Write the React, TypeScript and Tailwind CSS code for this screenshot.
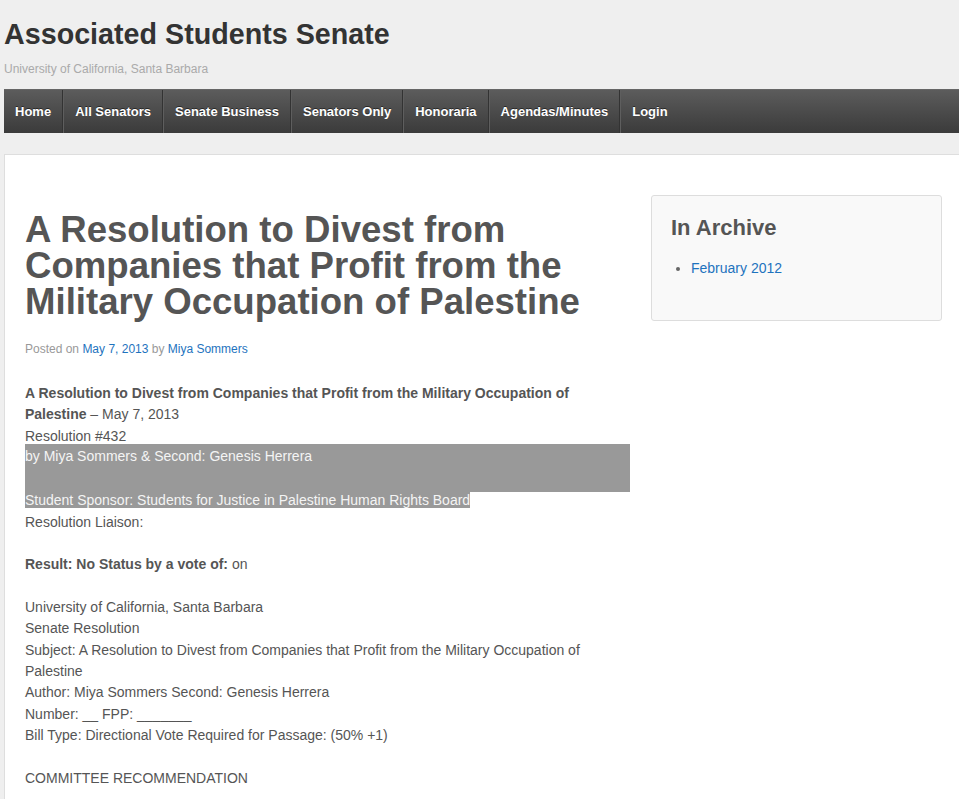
import React from "react";

const navItems = ["Home", "All Senators", "Senate Business", "Senators Only", "Honoraria", "Agendas/Minutes", "Login"];

export default function App() {
  return (
    <div className="min-h-[799px] bg-[#efefef] overflow-hidden" style={{ fontFamily: '"Liberation Sans", Arial, sans-serif' }}>
      <header className="pl-[4px] pt-[17px]">
        <h1 className="text-[28.7px] leading-[34px] font-bold text-[#333]">Associated Students Senate</h1>
        <div className="mt-[11px] text-[12px] leading-[14px] text-[#aaa]">University of California, Santa Barbara</div>
      </header>
      <nav className="ml-[4px] mt-[13px] h-[44px] flex bg-gradient-to-b from-[#5c5c5c] to-[#3b3b3b] border-t border-[#666]">
        {navItems.map((item, i) => (
          <div
            key={item}
            className={`flex items-center px-[11px] text-[13px] font-bold text-white [text-shadow:0_-1px_0_rgba(0,0,0,0.5)] ${i > 0 ? "border-l border-l-[#5e5e5e]" : ""} ${i < navItems.length - 1 ? "border-r border-r-[#333]" : ""}`}
          >
            {item}
          </div>
        ))}
      </nav>
      <main className="ml-[4px] mt-[21px] bg-white border-t border-l border-[#dedede] min-h-[660px] flex">
        <article className="w-[626px] pl-[20px] pt-[57px] shrink-0">
          <h2 className="text-[36.6px] leading-[36px] font-bold text-[#555]">
            A Resolution to Divest from Companies that Profit from the Military Occupation of Palestine
          </h2>
          <div className="mt-[22px] text-[12px] leading-[14px] text-[#999]">
            Posted on <span className="text-[#1e73be]">May 7, 2013</span> by <span className="text-[#1e73be]">Miya Sommers</span>
          </div>
          <div className="mt-[27px] w-[605px] text-[14px] leading-[21.33px] text-[#555]">
            <p>
              <b>A Resolution to Divest from Companies that Profit from the Military Occupation of Palestine</b> – May 7, 2013
              <br />
              Resolution #432
            </p>
            <div className="-mt-[3px] bg-[#999] text-[#f4f4f4] pt-[2.3px] h-[48px]">by Miya Sommers &amp; Second: Genesis Herrera</div>
            <p className="-mt-[1.7px]">
              <span className="bg-[#999] text-[#f4f4f4]">Student Sponsor: Students for Justice in Palestine Human Rights Board</span>
              <br />
              Resolution Liaison:
            </p>
            <p className="mt-[21.33px]">
              <b>Result: No Status by a vote of:</b> on
            </p>
            <p className="mt-[21.33px]">
              University of California, Santa Barbara
              <br />
              Senate Resolution
              <br />
              Subject: A Resolution to Divest from Companies that Profit from the Military Occupation of Palestine
              <br />
              Author: Miya Sommers Second: Genesis Herrera
              <br />
              Number: __ FPP: _______
              <br />
              Bill Type: Directional Vote Required for Passage: (50% +1)
            </p>
            <p className="mt-[21.33px]">COMMITTEE RECOMMENDATION</p>
          </div>
        </article>
        <aside className="ml-[20px] mt-[40px]">
          <div className="w-[291px] h-[126px] bg-[#f9f9f9] border border-[#dddddd] rounded-[3px] pl-[19px] pt-[17px]">
            <h3 className="text-[22px] leading-[30px] font-bold text-[#555]">In Archive</h3>
            <ul className="mt-[15px] list-disc pl-[20px] text-[14px] leading-[20px] text-[#555] marker:text-[#666]">
              <li><span className="text-[#1e73be]">February 2012</span></li>
            </ul>
          </div>
        </aside>
      </main>
    </div>
  );
}
